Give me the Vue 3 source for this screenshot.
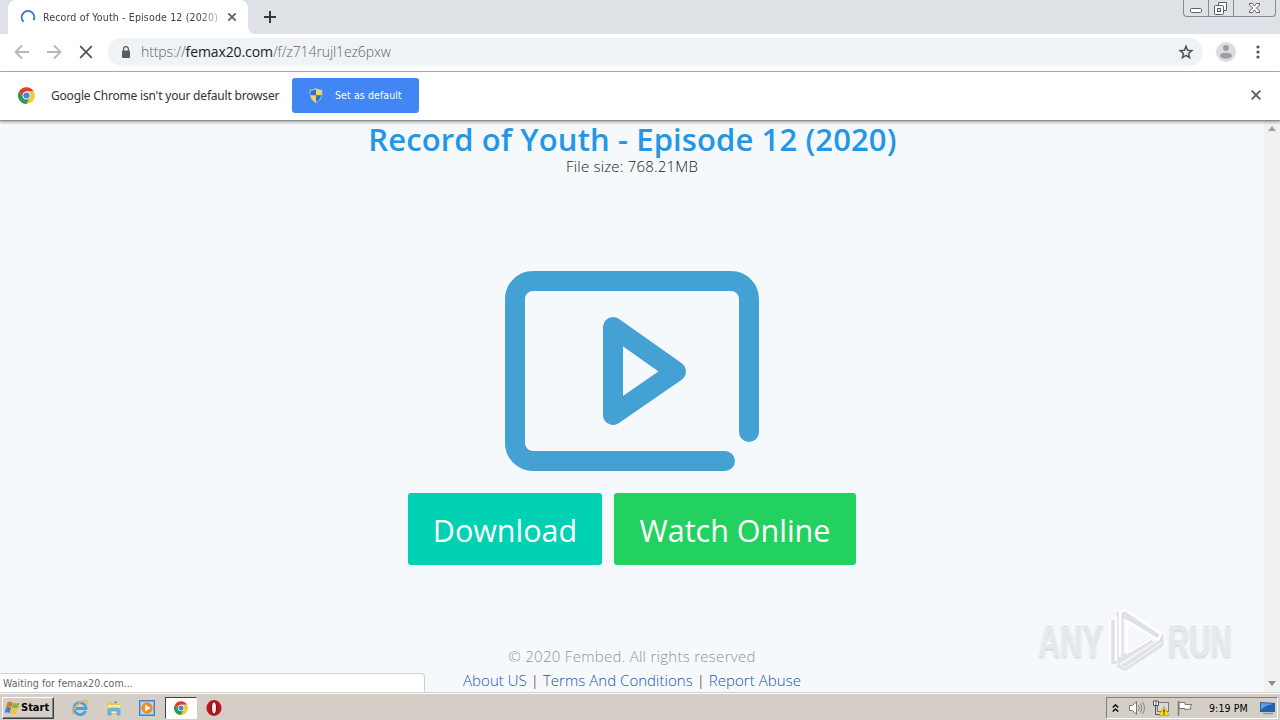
<script setup>
import { ref } from 'vue'

const title = ref('Record of Youth - Episode 12 (2020)')
const fileSize = ref('768.21MB')
const clock = ref('9:19 PM')
const loading = ref(true)
</script>

<template>
  <div class="screen">
    <header class="tab-strip">
      <div class="tab">
        <svg class="spinner" width="16" height="16" viewBox="0 0 16 16">
          <path d="M3.600 12.800A6.300 6.300 0 1 1 13.600 11.200" fill="none" stroke="#3f77cf" stroke-width="2" />
        </svg>
        <span class="tab-title">{{ title }}</span>
        <svg class="tab-close" width="10" height="10" viewBox="0 0 10 10">
          <path d="M1.300 1.300l7.400 7.400M8.700 1.300l-7.400 7.400" stroke="#5a5d61" stroke-width="1.7" />
        </svg>
      </div>
      <svg class="tab-foot" width="8" height="8" viewBox="0 0 8 8">
        <path d="M0 0v8h8Q0 8 0 0z" fill="#fff" />
      </svg>
      <svg class="new-tab" width="12" height="12" viewBox="0 0 12 12">
        <path d="M6 0v12M0 6h12" stroke="#34373b" stroke-width="2" />
      </svg>
      <div class="window-buttons">
        <span class="win-btn">
          <svg width="24" height="16" viewBox="0 0 24 16">
            <rect x="6.500" y="8.500" width="11" height="4" rx="1" fill="#fff" stroke="#5a5f68" />
          </svg>
        </span>
        <span class="win-btn">
          <svg width="24" height="16" viewBox="0 0 24 16">
            <path d="M9.500 2.500h8v8h-8z" fill="#fff" stroke="#5a5f68" />
            <rect x="5.500" y="5.500" width="9" height="9" rx="1" fill="#fff" stroke="#5a5f68" />
            <rect x="8.500" y="8.500" width="3" height="3" fill="#dee1e6" stroke="#5a5f68" />
          </svg>
        </span>
        <span class="win-btn">
          <svg width="41" height="16" viewBox="0 0 41 16">
            <path d="M15.500 3.500h3l2 2.500 2-2.500h3v1.500l-3 3 3 3v1.500h-3l-2-2.500-2 2.500h-3v-1.500l3-3-3-3z" fill="#fff" stroke="#5a5f68" />
          </svg>
        </span>
      </div>
    </header>

    <div class="toolbar">
      <svg class="nav-icon" width="16" height="16" viewBox="0 0 16 16">
        <path d="M15 8H2M8 1.500L1.500 8 8 14.500" fill="none" stroke="#b5b7ba" stroke-width="1.800" />
      </svg>
      <svg class="nav-icon" width="16" height="16" viewBox="0 0 16 16">
        <path d="M1 8h13M8 1.500L14.500 8 8 14.500" fill="none" stroke="#b5b7ba" stroke-width="1.800" />
      </svg>
      <svg class="nav-icon" width="16" height="16" viewBox="0 0 16 16">
        <path v-if="loading" d="M2.200 2.200l11.600 11.600M13.800 2.200L2.200 13.800" stroke="#505357" stroke-width="1.700" />
      </svg>
      <div class="address">
        <svg class="lock" width="10" height="13" viewBox="0 0 10 13">
          <path d="M2.600 6V3a2.400 2.400 0 0 1 4.800 0V6" fill="none" stroke="#5a5d61" stroke-width="1.300" />
          <rect x="1" y="4.500" width="8" height="7.500" rx="1" fill="#5a5d61" />
        </svg>
        <div class="url">https://<b>femax20.com</b>/f/z714rujl1ez6pxw</div>
        <svg class="star" width="16" height="16" viewBox="0 0 16 16">
          <path d="M8 2.300l1.600 4 4.300.35-3.300 2.800 1 4.200L8 11.400l-3.600 2.250 1-4.200-3.300-2.800 4.300-.35z" fill="none" stroke="#505357" stroke-width="1.500" />
        </svg>
      </div>
      <svg class="avatar" width="20" height="20" viewBox="0 0 20 20">
        <circle cx="10" cy="10" r="10" fill="#dcdddf" />
        <circle cx="10" cy="6" r="3" fill="#9c9ea1" />
        <ellipse cx="10" cy="13.700" rx="6" ry="3" fill="#9c9ea1" />
      </svg>
      <svg class="menu" width="4" height="14" viewBox="0 0 4 14">
        <circle cx="2" cy="2" r="1.600" fill="#505357" />
        <circle cx="2" cy="7" r="1.600" fill="#505357" />
        <circle cx="2" cy="12" r="1.600" fill="#505357" />
      </svg>
    </div>

    <div class="infobar">
      <svg class="chrome-logo" width="17" height="17" viewBox="0 0 48 48">
        <path d="M3.200 12A24 24 0 0 1 44.800 13H24L14.500 29.500z" fill="#e33b2e" />
        <path d="M24 13h20.800A24 24 0 0 1 24 48l9.500-18.500z" fill="#fbc832" />
        <path d="M3.200 12A24 24 0 0 0 24 48l9.500-18.500h-19z" fill="#2a9b4d" />
        <circle cx="24" cy="24" r="11" fill="#fff" />
        <circle cx="24" cy="24" r="8.800" fill="#4285e8" />
      </svg>
      <span class="infobar-text">Google Chrome isn't your default browser</span>
      <button class="default-btn">
        <svg width="14" height="15" viewBox="0 0 14 15">
          <path d="M7 .5C5 1.800 3 2.200 1 2.200 1 8 2 12 7 14.500 12 12 13 8 13 2.200 11 2.200 9 1.800 7 .5z" fill="#f7d84a" stroke="#b9c7d8" />
          <path d="M7 1.200V7.200H1.600Q1.300 5 1.500 2.700 4.800 2.500 7 1.200zM7 7.200h5.400Q11.500 12 7 14z" fill="#2f6fd0" />
        </svg>
        <span>Set as default</span>
      </button>
      <svg class="infobar-close" width="10" height="10" viewBox="0 0 10 10">
        <path d="M.7.7l8.600 8.600M9.300.7L.7 9.300" stroke="#5a5d61" stroke-width="1.900" />
      </svg>
    </div>

    <div class="viewport">
      <main class="page">
        <h1>{{ title }}</h1>
        <p class="file-size">File size: {{ fileSize }}</p>
        <svg class="video-icon" width="256" height="202" viewBox="0 0 256 202">
          <g fill="none" stroke="#44a1d3" stroke-linecap="round" stroke-linejoin="round">
            <path d="M221 191H29A18 18 0 0 1 11 173V29A18 18 0 0 1 29 11H227A18 18 0 0 1 245 29V162" stroke-width="20" />
            <path d="M109 57L172 101.500 109 145z" stroke-width="20" />
          </g>
        </svg>
        <div class="actions">
          <button class="download">Download</button>
          <button class="watch">Watch Online</button>
        </div>
        <footer>
          <p class="copyright">© 2020 Fembed. All rights reserved</p>
          <p class="links"><a>About US</a> | <a>Terms And Conditions</a> | <a>Report Abuse</a></p>
        </footer>
      </main>
      <div class="scrollbar">
        <svg width="8" height="5" viewBox="0 0 8 5"><path d="M0 5l4-5 4 5z" fill="#a0a0a0" /></svg>
        <svg width="8" height="5" viewBox="0 0 8 5"><path d="M0 0l4 5 4-5z" fill="#8c8c8c" /></svg>
      </div>
      <div class="status">Waiting for femax20.com...</div>
      <div class="watermark">
        <span class="word any"><span>ANY</span></span>
        <svg width="60" height="66" viewBox="0 0 60 66">
          <g fill="none" stroke-linejoin="round">
            <path d="M8 10V56M15 4V52L47 32.500M15 4L55 29V36L20 59L13 55" stroke="#dfe2e4" stroke-width="7" />
            <path d="M5 56V12L11 9V53M15 49V4L20 2L56 26L53 32L22 13V45L46 31" stroke="#fff" stroke-width="2.500" />
            <path d="M56 35L20 60L15 56L50 34" stroke="#f1f3f4" stroke-width="1.500" />
          </g>
        </svg>
        <span class="word run"><span>RUN</span></span>
      </div>
    </div>

    <div class="taskbar">
      <div class="start">
        <svg width="17" height="16" viewBox="0 0 17 16">
          <path d="M3.500 2.500Q6 1 8.500 2.500L7.300 7.300Q5 6 2.200 7.200z" fill="#ea6a2c" />
          <path d="M9 2.800Q12 4.200 15.500 2.800L14 7.800Q11 9 7.800 7.500z" fill="#82b93b" />
          <path d="M2 7.700Q4.600 6.500 7 7.800L5.700 13Q3.500 11.700.8 12.800z" fill="#3c83cf" />
          <path d="M7.600 8.100Q11 9.500 13.800 8.300L12.400 13.500Q9.600 14.800 6.300 13.300z" fill="#f5c332" />
        </svg>
        <span>Start</span>
      </div>
      <div class="quick">
        <span class="task">
          <svg width="18" height="18" viewBox="0 0 18 18">
            <path d="M14.500 12A6 6 0 1 1 15 9.500H5" fill="none" stroke="#43a5df" stroke-width="2.800" />
            <path d="M2.500 15.500C-1 15 4 5 12 2c5-1.500 5 1 3.500 3.500" fill="none" stroke="#e2b844" stroke-width="1.300" />
          </svg>
        </span>
        <span class="task">
          <svg width="16" height="16" viewBox="0 0 16 16">
            <path d="M1 2h5l1 2h7v10H1z" fill="#e9c95e" />
            <path d="M2 5h12v8H2z" fill="#fbefa8" />
            <path d="M2 15V9.500Q2 8 4 8h8q2 0 2 1.500V15h-3v-4H5v4z" fill="#71b7dd" stroke="#4f98c4" stroke-width=".6" />
            <path d="M8 2.500h3" stroke="#4bae55" stroke-width="1.500" />
          </svg>
        </span>
        <span class="task">
          <svg width="16" height="16" viewBox="0 0 16 16">
            <rect x=".5" y=".5" width="15" height="15" fill="#73b2e3" stroke="#4483bd" />
            <rect x="2" y="2" width="12" height="12" fill="#b9dcf4" />
            <circle cx="8" cy="8" r="5.700" fill="#f28a1c" />
            <path d="M6.200 4.500L11.500 8l-5.300 3.500z" fill="#fff" />
          </svg>
        </span>
        <span class="task active">
          <svg width="14" height="14" viewBox="0 0 48 48">
            <path d="M3.200 12A24 24 0 0 1 44.800 13H24L14.500 29.500z" fill="#e33b2e" />
            <path d="M24 13h20.800A24 24 0 0 1 24 48l9.500-18.500z" fill="#fbc832" />
            <path d="M3.200 12A24 24 0 0 0 24 48l9.500-18.500h-19z" fill="#2a9b4d" />
            <circle cx="24" cy="24" r="11" fill="#fff" />
            <circle cx="24" cy="24" r="8.800" fill="#4285e8" />
          </svg>
        </span>
        <span class="task">
          <svg width="16" height="16" viewBox="0 0 16 16">
            <ellipse cx="8" cy="8" rx="7.600" ry="7.900" fill="#b3191e" />
            <ellipse cx="8" cy="8" rx="3.500" ry="6.300" fill="#8d0d13" />
            <ellipse cx="8" cy="8" rx="2" ry="5.400" fill="#f4e9e6" />
          </svg>
        </span>
      </div>
      <div class="tray">
        <svg width="7" height="8" viewBox="0 0 7 8">
          <path d="M.7 3.500l2.800-2.600 2.800 2.600M.7 7.500l2.800-2.600 2.800 2.600" fill="none" stroke="#111" stroke-width="1.500" />
        </svg>
        <svg class="speaker" width="16" height="16" viewBox="0 0 16 16">
          <path d="M.5 5.500h3l4-4v13l-4-4h-3z" fill="#fff" stroke="#777" />
          <path d="M9.500 5q2 3 0 6M11.500 3.500q3 4.500 0 9M13.500 2q4 6 0 12" fill="none" stroke="#858585" />
        </svg>
        <svg class="network" width="16" height="16" viewBox="0 0 16 16">
          <rect x="4.500" y="2.500" width="11" height="9" fill="#d9d9d9" stroke="#777" />
          <path d="M.5 1v4.500h5V1zM3 1v4" fill="#fff" stroke="#555" />
          <path d="M2.500 6v8.500h4" fill="none" stroke="#555" />
          <path d="M11 6.500l5 9H6z" fill="#ffdc1c" stroke="#c79e00" stroke-width=".7" />
          <path d="M11 9.500v3M11 13.300v1.200" stroke="#222" stroke-width="1.200" />
        </svg>
        <svg class="flag" width="16" height="16" viewBox="0 0 16 16">
          <path d="M2 2.500h6v2h7q-3 2-1 4.500l-6 .5v-1H2z" fill="#fff" stroke="#777" />
          <path d="M1.500 1v14.500" stroke="#777" stroke-width="1.500" />
        </svg>
        <span class="clock">{{ clock }}</span>
        <svg class="desktop" width="16" height="14" viewBox="0 0 16 14">
          <path d="M0 1l15 1v9H0z" fill="#2263ae" />
          <path d="M1 2l13 1Q5 4 1 9z" fill="#5d9fdc" />
          <path d="M3 12.500h10" stroke="#8399ae" stroke-width="1.500" />
        </svg>
      </div>
    </div>
  </div>
</template>

<style>
body {
  overflow: hidden;
}
</style>

<style scoped>
.screen {
  display: flex;
  flex-direction: column;
  width: 1280px;
  height: 720px;
  overflow: hidden;
  background: #fff;
  font-family: 'DejaVu Sans Condensed', 'DejaVu Sans', sans-serif;
}

svg {
  display: block;
  flex: none;
}

button {
  border: none;
  padding: 0;
  font-family: inherit;
}

.tab-strip {
  display: flex;
  align-items: flex-start;
  height: 34px;
  padding-left: 8px;
  background: #dee1e6;
}

.tab {
  display: flex;
  align-items: center;
  box-sizing: border-box;
  width: 240px;
  height: 34px;
  padding-left: 12px;
  border-radius: 8px 8px 0 0;
  background: #fff;
}

.tab-title {
  width: 176px;
  margin-left: 7px;
  overflow: hidden;
  white-space: nowrap;
  font-size: 10.5px;
  letter-spacing: 0.16px;
  color: #3c4043;
  mask-image: linear-gradient(to right, #000 155px, transparent 185px);
}

.tab-close {
  margin-left: 8px;
}

.tab-foot {
  align-self: flex-end;
}

.new-tab {
  margin: 11px 0 0 8px;
}

.window-buttons {
  display: flex;
  margin-left: auto;
  margin-right: 4px;
  border: 1px solid #858a94;
  border-top: none;
  border-radius: 0 0 4px 4px;
}

.win-btn + .win-btn {
  border-left: 1px solid #858a94;
}

.toolbar {
  display: flex;
  align-items: center;
  box-sizing: border-box;
  height: 38px;
  padding: 0 0 1px 14px;
  border-bottom: 1px solid #b3b5b8;
}

.nav-icon {
  margin-right: 16px;
}

.address {
  display: flex;
  align-items: center;
  box-sizing: border-box;
  width: 1095px;
  height: 28px;
  margin-left: -2px;
  padding: 0 9px 0 13px;
  border-radius: 14px;
  background: #f0f3f6;
}

.url {
  flex: 1;
  margin-left: 10px;
  padding-bottom: 1px;
  font-family: 'Open Sans', sans-serif;
  font-size: 14px;
  font-weight: 300;
  letter-spacing: -0.1px;
  color: #5f6368;
}

.url b {
  font-weight: 400;
  color: #202124;
}

.avatar {
  margin-left: 13px;
}

.menu {
  margin-left: 20px;
}

.infobar {
  display: flex;
  align-items: center;
  position: relative;
  z-index: 1;
  box-sizing: border-box;
  height: 49px;
  padding: 0 0 2px 18px;
  border-bottom: 1px solid #8c8e90;
  background: #fff;
  box-shadow: 0 1px 3px rgba(0, 0, 0, 0.4);
}

.infobar-text {
  width: 229px;
  margin-left: 16px;
  white-space: nowrap;
  font-family: 'Noto Sans', sans-serif;
  font-size: 12px;
  letter-spacing: -0.19px;
  color: #333;
}

.default-btn {
  display: flex;
  align-items: center;
  width: 127px;
  height: 35px;
  margin-left: 12px;
  padding-left: 17px;
  border-radius: 3px;
  background: #4285f4;
  color: #fff;
  font-size: 10.5px;
  letter-spacing: 0.1px;
}

.default-btn span {
  margin-left: 12px;
  white-space: nowrap;
}

.infobar-close {
  margin-left: auto;
  margin-right: 19px;
}

.viewport {
  display: flex;
  position: relative;
  flex: 1;
  background: #f5f9fc;
}

.page {
  display: flex;
  flex: 1;
  flex-direction: column;
  align-items: center;
  font-family: 'Open Sans', sans-serif;
}

h1 {
  margin: 0;
  padding-left: 1px;
  white-space: nowrap;
  font-size: 31px;
  font-weight: 600;
  line-height: 37px;
  letter-spacing: 0.11px;
  color: #2397e6;
}

.file-size {
  margin: 0;
  padding-bottom: 2px;
  font-size: 15px;
  font-weight: 300;
  line-height: 16px;
  letter-spacing: 0.2px;
  color: #222;
}

.video-icon {
  margin-top: 94px;
}

.actions {
  display: flex;
  gap: 12px;
  margin-top: 21px;
}

.actions button {
  height: 72px;
  padding-top: 1px;
  border-radius: 3px;
  font-size: 30.5px;
  color: #fff;
}

.actions .download {
  width: 194px;
  background: #00d1b2;
}

.actions .watch {
  width: 242px;
  background: #23d160;
}

footer {
  margin-top: 79px;
  text-align: center;
  font-size: 15px;
  font-weight: 300;
  line-height: 24px;
  white-space: nowrap;
}

footer p {
  margin: 0;
}

.copyright {
  letter-spacing: 0.28px;
  color: #8f9396;
}

.links {
  letter-spacing: 0.04px;
  color: #222;
}

.links a {
  color: #2355a8;
}

.scrollbar {
  display: flex;
  flex-direction: column;
  align-items: center;
  justify-content: space-between;
  box-sizing: border-box;
  width: 16px;
  padding: 5px 0 6px;
  background: #f1f1f1;
}

.status {
  position: absolute;
  left: 0;
  bottom: 0;
  box-sizing: border-box;
  width: 425px;
  height: 19px;
  padding-left: 3px;
  border: 1px solid #cfd1d3;
  border-width: 1px 1px 0 0;
  border-radius: 0 4px 0 0;
  background: #fff;
  font-size: 10.5px;
  line-height: 18px;
  letter-spacing: 0.06px;
  color: #666;
}

.watermark {
  display: flex;
  align-items: center;
  position: absolute;
  left: 1038px;
  top: 487px;
  font-family: 'Liberation Sans', sans-serif;
  font-size: 46px;
  font-weight: bold;
  line-height: 66px;
  color: #e6e9eb;
  text-shadow: 0 -1px 1px #fff, 0 1px 3px #c4c8ca;
}

.word {
  width: 67px;
}

.word span {
  display: inline-block;
  transform-origin: left center;
}

.any span {
  transform: scaleX(0.67);
}

.run {
  margin-left: 3px;
}

.run span {
  transform: scaleX(0.64);
}

.taskbar {
  display: flex;
  align-items: center;
  box-sizing: border-box;
  height: 28px;
  padding: 2px 2px 0;
  border-top: 1px solid #d4d0c8;
  box-shadow: inset 0 1px #fff;
  background: #d5cec6;
}

.start {
  display: flex;
  align-items: center;
  box-sizing: border-box;
  width: 52px;
  height: 22px;
  padding-left: 1px;
  border: 1px solid;
  border-color: #fff #404040 #404040 #fff;
  box-shadow: inset -1px -1px #808080;
  font-size: 11px;
  font-weight: bold;
  color: #000;
}

.quick {
  display: flex;
  gap: 1.5px;
  margin-left: 10px;
}

.task {
  display: flex;
  align-items: center;
  justify-content: center;
  box-sizing: border-box;
  width: 32px;
  height: 22px;
}

.task.active {
  border: 1px solid;
  border-color: #404040 #fff #fff #404040;
  background: #fff;
}

.tray {
  display: flex;
  align-items: center;
  box-sizing: border-box;
  width: 172px;
  height: 22px;
  margin-left: auto;
  padding-left: 5px;
  border: 1px solid;
  border-color: #808080 #fff #fff #808080;
}

.speaker {
  margin-left: 10px;
}

.network {
  margin-left: 8px;
}

.flag {
  margin-left: 8px;
}

.clock {
  width: 40px;
  margin-left: 16px;
  white-space: nowrap;
  font-size: 10.5px;
  letter-spacing: 0.1px;
  color: #000;
}

.desktop {
  margin-left: 11px;
}
</style>
